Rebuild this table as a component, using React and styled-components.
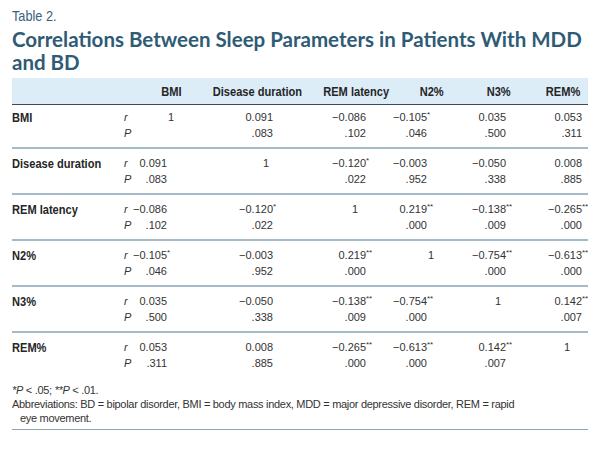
import styled, { createGlobalStyle } from 'styled-components';

const GlobalStyle = createGlobalStyle`
    body {
        margin: 0;
        background: #fff;
        font-family: "Liberation Sans", Arial, sans-serif;
        color: #222;
    }
`;

// width, pad for numbers, pad for the "1" cell
const COLS = [
    { name: 'BMI', w: 72, pad: 40, one: 33 },
    { name: 'Disease duration', w: 100, pad: 34, one: 38 },
    { name: 'REM latency', w: 98, pad: 39, one: 47 },
    { name: 'N2%', w: 54, pad: 32, one: 25 },
    { name: 'N3%', w: 80, pad: 33, one: 38 },
    { name: 'REM%', w: 49, pad: 6, one: 18 },
];

const GRID = `106px 17px ${COLS.map((c) => c.w + 'px').join(' ')}`;

const ROWS = [
    { label: 'BMI', r: ['1', '0.091', '−0.086', '−0.105*', '0.035', '0.053'], p: ['', '.083', '.102', '.046', '.500', '.311'] },
    { label: 'Disease duration', r: ['0.091', '1', '−0.120*', '−0.003', '−0.050', '0.008'], p: ['.083', '', '.022', '.952', '.338', '.885'] },
    { label: 'REM latency', r: ['−0.086', '−0.120*', '1', '0.219**', '−0.138**', '−0.265**'], p: ['.102', '.022', '', '.000', '.009', '.000'] },
    { label: 'N2%', r: ['−0.105*', '−0.003', '0.219**', '1', '−0.754**', '−0.613**'], p: ['.046', '.952', '.000', '', '.000', '.000'] },
    { label: 'N3%', r: ['0.035', '−0.050', '−0.138**', '−0.754**', '1', '0.142**'], p: ['.500', '.338', '.009', '.000', '', '.007'] },
    { label: 'REM%', r: ['0.053', '0.008', '−0.265**', '−0.613**', '0.142**', '1'], p: ['.311', '.885', '.000', '.000', '.007', ''] },
];

const Page = styled.div`
    width: 600px;
    height: 450px;
    padding: 6px 12px 0;
    box-sizing: border-box;
`;

// narrow face: no condensed family installed, so squeeze Liberation Sans
const Narrow = styled.span`
    display: inline-block;
    white-space: nowrap;
    transform: scaleX(0.82);
    transform-origin: ${(p) => (p.$center ? 'center' : 'left')};
`;

const Caption = styled.div`
    font-size: 15.5px;
    color: #3b6079;
    line-height: 20px;
`;

const Title = styled.h2`
    margin: 2px 0 0;
    font-family: Lato, "Open Sans", sans-serif;
    font-weight: 700;
    font-size: 20.5px;
    line-height: 23px;
    color: #2e5b75;
`;

const Table = styled.div`
    margin-top: 4px;
    width: 576px;
`;

const HeadRow = styled.div`
    display: grid;
    grid-template-columns: ${GRID};
    height: 26px;
    align-items: center;
    background: #dcedf8;
    border-bottom: 1.5px solid #3a4a56;
`;

const HeadCell = styled.div`
    display: flex;
    justify-content: center;
    font-weight: 700;
    font-size: 13.5px;
    color: #262626;
`;

const Group = styled.div`
    display: grid;
    grid-template-columns: ${GRID};
    grid-auto-rows: 16px;
    align-items: center;
    padding: ${(p) => (p.$first ? '4px 0 6px' : '6px 0 6px')};
    border-bottom: ${(p) => (p.$last ? 'none' : '2px solid #a3bac9')};
`;

const Label = styled.div`
    font-weight: 700;
    font-size: 13.5px;
    color: #262626;
`;

const Stat = styled.div`
    font-style: italic;
    font-size: 11px;
    color: #333;
    padding-left: 6px;
`;

const Value = styled.div`
    display: flex;
    justify-content: flex-end;
    font-size: 11px;
    color: #333;
    white-space: nowrap;
    padding-right: ${(p) => p.$pad}px;
`;

const Stars = styled.span`
    width: 0;
    font-size: 8px;
    align-self: flex-start;
    margin-top: -1px;
    white-space: nowrap;
`;

const Notes = styled.div`
    margin-top: 6px;
    font-size: 11px;
    line-height: 14px;
    color: #333;
    letter-spacing: -0.3px;
    padding-bottom: 4px;
    border-bottom: 1.5px solid #8ea5b6;
`;

const Note = styled.p`
    margin: 0;
    padding: 0 70px 0 8px;
    text-indent: -8px;
`;

function Num({ text, col }) {
    if (text === '1') return <Value $pad={col.one}>1</Value>;
    const m = text.match(/^([^*]*)(\**)$/);
    return (
        <Value $pad={col.pad}>
            <span>{m[1]}</span>
            {m[2] && <Stars>{m[2]}</Stars>}
        </Value>
    );
}

export default function App() {
    return (
        <Page>
            <GlobalStyle />
            <Caption>
                <Narrow>Table 2.</Narrow>
            </Caption>
            <Title>
                Correlations Between Sleep Parameters in Patients With MDD
                <br />
                and BD
            </Title>
            <Table>
                <HeadRow>
                    <div />
                    <div />
                    {COLS.map((c) => (
                        <HeadCell key={c.name}>
                            <Narrow $center>{c.name}</Narrow>
                        </HeadCell>
                    ))}
                </HeadRow>
                {ROWS.map((row, i) => (
                    <Group key={row.label} $first={i === 0} $last={i === ROWS.length - 1}>
                        <Label>
                            <Narrow>{row.label}</Narrow>
                        </Label>
                        <Stat>r</Stat>
                        {row.r.map((v, j) => (
                            <Num key={j} text={v} col={COLS[j]} />
                        ))}
                        <div />
                        <Stat>P</Stat>
                        {row.p.map((v, j) => (
                            <Num key={j} text={v} col={COLS[j]} />
                        ))}
                    </Group>
                ))}
            </Table>
            <Notes>
                <Note>
                    <i>*P</i> &lt; .05; <i>**P</i> &lt; .01.
                </Note>
                <Note>
                    Abbreviations: BD = bipolar disorder, BMI = body mass index, MDD = major depressive disorder, REM = rapid eye movement.
                </Note>
            </Notes>
        </Page>
    );
}
